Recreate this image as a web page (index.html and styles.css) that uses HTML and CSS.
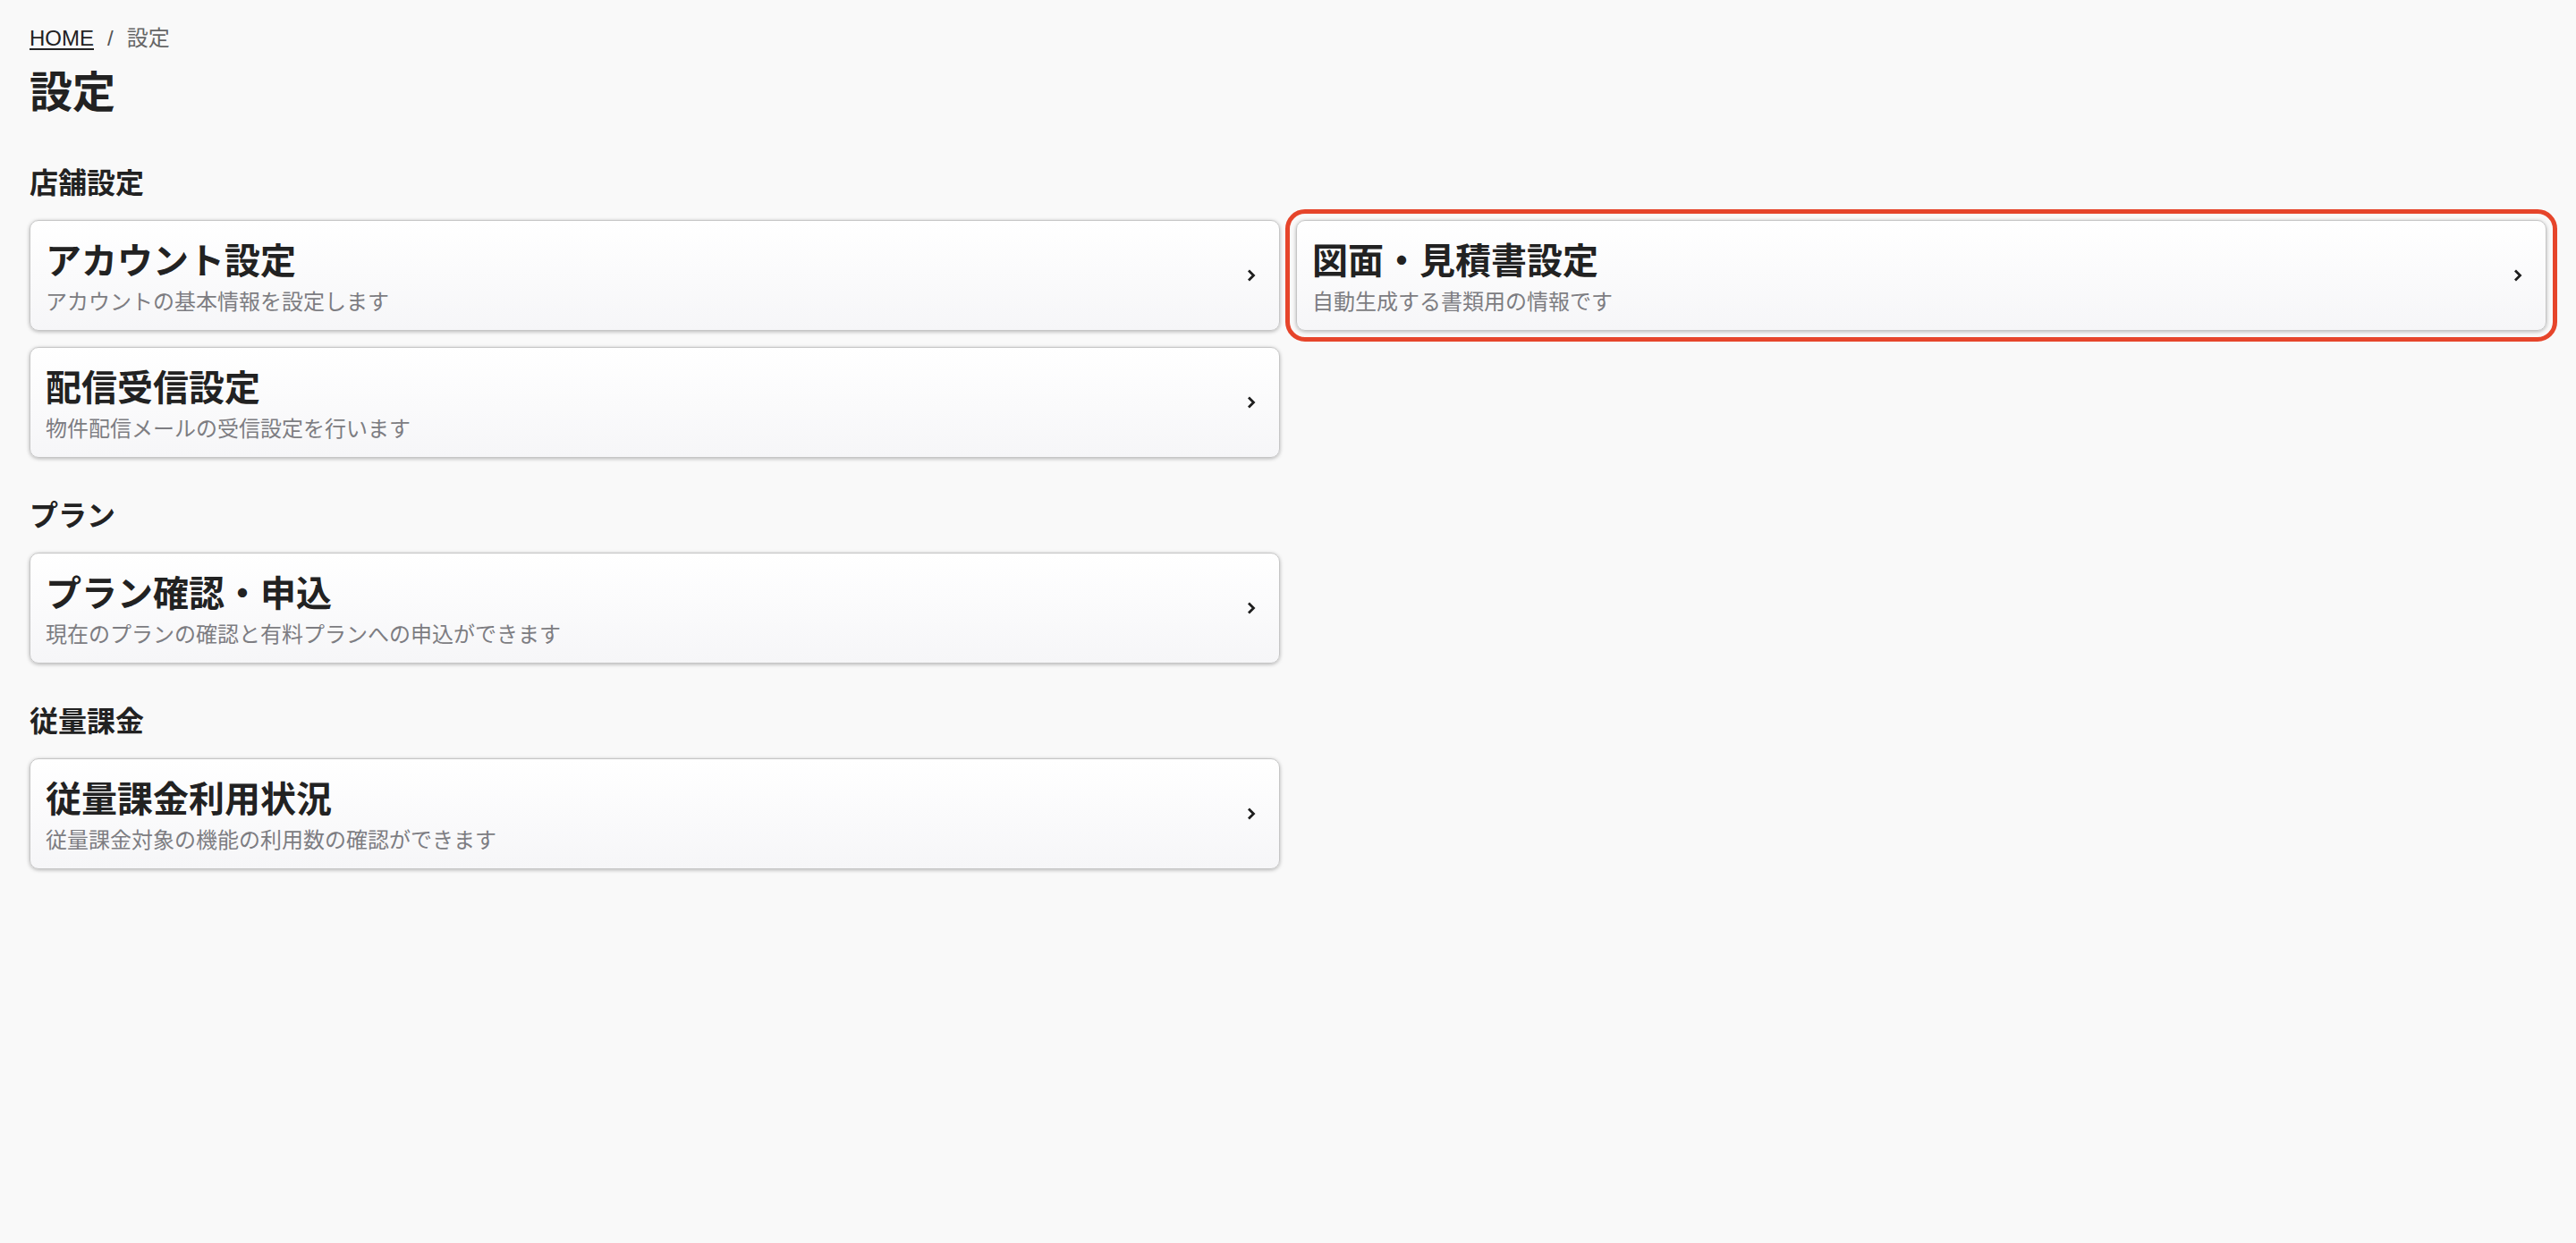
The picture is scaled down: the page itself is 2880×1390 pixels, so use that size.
FILE: index.html
```html
<!DOCTYPE html>
<html lang="ja">
<head>
  <meta charset="UTF-8">
  <meta name="viewport" content="width=device-width, initial-scale=1.0">
  <title>設定</title>
  <link rel="stylesheet" href="styles.css">
</head>
<body>

<div id="settings">
  <nav class="breadcrumb">
    <a href="#">HOME</a>
    <span class="sep">/</span>
    <span class="current">設定</span>
  </nav>

  <h1>設定</h1>

  <section class="group">
    <h2>店舗設定</h2>
    <div class="cards">
      <a class="card" href="#">
        <div class="card-text">
          <div class="card-title">アカウント設定</div>
          <div class="card-desc">アカウントの基本情報を設定します</div>
        </div>
        <svg class="chevron" width="10" height="14" viewBox="0 0 10 14"><polyline points="2,1.5 7.5,7 2,12.5" /></svg>
      </a>
      <a class="card marked" href="#">
        <div class="card-text">
          <div class="card-title">図面・見積書設定</div>
          <div class="card-desc">自動生成する書類用の情報です</div>
        </div>
        <svg class="chevron" width="10" height="14" viewBox="0 0 10 14"><polyline points="2,1.5 7.5,7 2,12.5" /></svg>
      </a>
      <a class="card" href="#">
        <div class="card-text">
          <div class="card-title">配信受信設定</div>
          <div class="card-desc">物件配信メールの受信設定を行います</div>
        </div>
        <svg class="chevron" width="10" height="14" viewBox="0 0 10 14"><polyline points="2,1.5 7.5,7 2,12.5" /></svg>
      </a>
    </div>
  </section>

  <section class="group">
    <h2>プラン</h2>
    <div class="cards">
      <a class="card" href="#">
        <div class="card-text">
          <div class="card-title">プラン確認・申込</div>
          <div class="card-desc">現在のプランの確認と有料プランへの申込ができます</div>
        </div>
        <svg class="chevron" width="10" height="14" viewBox="0 0 10 14"><polyline points="2,1.5 7.5,7 2,12.5" /></svg>
      </a>
    </div>
  </section>

  <section class="group">
    <h2>従量課金</h2>
    <div class="cards">
      <a class="card" href="#">
        <div class="card-text">
          <div class="card-title">従量課金利用状況</div>
          <div class="card-desc">従量課金対象の機能の利用数の確認ができます</div>
        </div>
        <svg class="chevron" width="10" height="14" viewBox="0 0 10 14"><polyline points="2,1.5 7.5,7 2,12.5" /></svg>
      </a>
    </div>
  </section>
</div>

</body>
</html>
```

FILE: styles.css
```css
body {
  font-family: 'Liberation Sans', 'Noto Sans CJK JP', sans-serif;
  margin: 0;
  padding: 0;
  background-color: #f9f9f9;
  color: #222;
}

#settings {
  padding: 24px 33px;
}

.breadcrumb {
  font-size: 24px;
  line-height: 36px;
  display: flex;
  align-items: center;
  margin-top: 1px;
}

.breadcrumb a {
  color: #222;
  text-decoration: underline;
  text-underline-offset: 3px;
  text-decoration-thickness: 2px;
}

.breadcrumb .sep {
  color: #555;
  padding: 0 15px;
}

.breadcrumb .current {
  color: #666;
}

h1 {
  font-size: 48px;
  line-height: 72px;
  font-weight: bold;
  margin: 7px 0 0;
}

.group {
  margin-top: 41px;
}

h2 {
  font-size: 32px;
  line-height: 48px;
  font-weight: bold;
  margin: 0 0 17px;
}

.cards {
  display: grid;
  grid-template-columns: 1fr 1fr;
  gap: 18px;
}

.card {
  display: flex;
  align-items: center;
  height: 124px;
  box-sizing: border-box;
  padding: 0 26px 0 17px;
  border: 1px solid #c6c6c6;
  border-radius: 10px;
  background: linear-gradient(#fff, #f6f6f8);
  box-shadow: 0 1px 4px rgba(0, 0, 0, 0.28);
  text-decoration: none;
  color: #222;
}

.card.marked {
  outline: 5px solid #e6452b;
  outline-offset: 7px;
}

.card-text {
  flex: 1;
  padding-top: 4px;
}

.card-title {
  font-size: 40px;
  line-height: 56px;
  font-weight: bold;
}

.card-desc {
  font-size: 24px;
  line-height: 36px;
  color: #7d7d82;
}

.chevron {
  fill: none;
  stroke: #1e1e1e;
  stroke-width: 2.8;
}
```
